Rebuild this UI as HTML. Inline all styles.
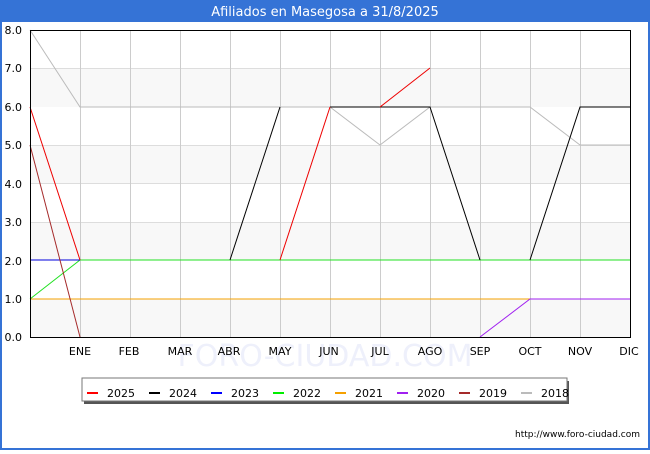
<!DOCTYPE html>
<html><head><style>
body{margin:0;width:650px;height:450px;overflow:hidden;background:#fff;font-family:"DejaVu Sans","Liberation Sans",sans-serif}
</style></head><body>
<svg width="650" height="450" xmlns="http://www.w3.org/2000/svg" font-family="DejaVu Sans, Liberation Sans, sans-serif">
<rect x="0" y="0" width="650" height="450" fill="#fff"/>
<rect x="0" y="0" width="650" height="22" fill="#3573d6"/>
<rect x="0" y="0" width="2" height="450" fill="#3573d6"/>
<rect x="648" y="0" width="2" height="450" fill="#3573d6"/>
<rect x="0" y="448" width="650" height="2" fill="#3573d6"/>
<text x="325" y="16" fill="#fff" font-size="13" text-anchor="middle">Afiliados en Masegosa a 31/8/2025</text>
<g fill="#f8f8f8">
<rect x="30" y="68" width="600" height="39"/>
<rect x="30" y="145" width="600" height="38"/>
<rect x="30" y="222" width="600" height="38"/>
<rect x="30" y="299" width="600" height="38"/>
</g>
<g stroke="#ddd" stroke-width="1">
<line x1="30" x2="630" y1="68.5" y2="68.5"/><line x1="30" x2="630" y1="145.5" y2="145.5"/><line x1="30" x2="630" y1="183.5" y2="183.5"/><line x1="30" x2="630" y1="222.5" y2="222.5"/>
</g>
<g stroke="#ccc" stroke-width="1">
<line x1="80.5" x2="80.5" y1="30" y2="337"/><line x1="130.5" x2="130.5" y1="30" y2="337"/><line x1="180.5" x2="180.5" y1="30" y2="337"/><line x1="230.5" x2="230.5" y1="30" y2="337"/><line x1="280.5" x2="280.5" y1="30" y2="337"/><line x1="330.5" x2="330.5" y1="30" y2="337"/><line x1="380.5" x2="380.5" y1="30" y2="337"/><line x1="430.5" x2="430.5" y1="30" y2="337"/><line x1="480.5" x2="480.5" y1="30" y2="337"/><line x1="530.5" x2="530.5" y1="30" y2="337"/><line x1="580.5" x2="580.5" y1="30" y2="337"/>
</g>
<text x="325" y="366" fill="#eef0fb" font-size="30" text-anchor="middle">FORO-CIUDAD.COM</text>
<g fill="none" stroke-width="1">
<polyline stroke="#bbb" points="30,30 80,107 330,107 380,145 430,107 530,107 580,145 630,145"/>
<polyline stroke="#f5a000" points="30,299 530,299"/>
<polyline stroke="#a020f0" points="480,337 530,299 630,299"/>
<polyline stroke="#22e022" points="30,299 80,260 630,260"/>
<polyline stroke="#0000dd" points="30,260 80,260"/>
<polyline stroke="#000" points="230,260 280,107"/>
<polyline stroke="#000" points="330,107 430,107 480,260"/>
<polyline stroke="#000" points="530,260 580,107 630,107"/>
<polyline stroke="#ee0000" points="30,107 80,260"/>
<polyline stroke="#ee0000" points="280,260 330,107"/>
<polyline stroke="#ee0000" points="380,107 430,68"/>
<polyline stroke="#a52a2a" points="30,145 80,337"/>
</g>
<rect x="30.5" y="30.5" width="600" height="307" fill="none" stroke="#000"/>
<g font-size="11" fill="#000" text-anchor="end">
<text x="22" y="34">8.0</text><text x="22" y="72">7.0</text><text x="22" y="111">6.0</text><text x="22" y="149">5.0</text><text x="22" y="188">4.0</text><text x="22" y="226">3.0</text><text x="22" y="265">2.0</text><text x="22" y="303">1.0</text><text x="22" y="341">0.0</text>
</g>
<g font-size="11" fill="#000" text-anchor="middle">
<text x="80" y="355">ENE</text><text x="129" y="355">FEB</text><text x="180" y="355">MAR</text><text x="229" y="355">ABR</text><text x="280" y="355">MAY</text><text x="329" y="355">JUN</text><text x="380" y="355">JUL</text><text x="430" y="355">AGO</text><text x="480" y="355">SEP</text><text x="530" y="355">OCT</text><text x="580" y="355">NOV</text><text x="629" y="355">DIC</text>
</g>
<rect x="84" y="381" width="485" height="23" fill="#555"/>
<rect x="82" y="378" width="485" height="23" fill="#fff" stroke="#777"/>
<g stroke-width="2">
<line x1="87" x2="98" y1="393" y2="393" stroke="#f00"/>
<line x1="149" x2="160" y1="393" y2="393" stroke="#000"/>
<line x1="211" x2="222" y1="393" y2="393" stroke="#00f"/>
<line x1="273" x2="284" y1="393" y2="393" stroke="#0e0"/>
<line x1="335" x2="346" y1="393" y2="393" stroke="#f5a000"/>
<line x1="397" x2="408" y1="393" y2="393" stroke="#a020f0"/>
<line x1="459" x2="470" y1="393" y2="393" stroke="#a52a2a"/>
<line x1="521" x2="532" y1="393" y2="393" stroke="#bbb"/>
</g>
<g font-size="11" fill="#000">
<text x="107" y="397">2025</text><text x="169" y="397">2024</text><text x="231" y="397">2023</text><text x="293" y="397">2022</text><text x="355" y="397">2021</text><text x="417" y="397">2020</text><text x="479" y="397">2019</text><text x="541" y="397">2018</text>
</g>
<text x="640" y="437" font-size="9" fill="#000" text-anchor="end">http://www.foro-ciudad.com</text>
</svg>
</body></html>
